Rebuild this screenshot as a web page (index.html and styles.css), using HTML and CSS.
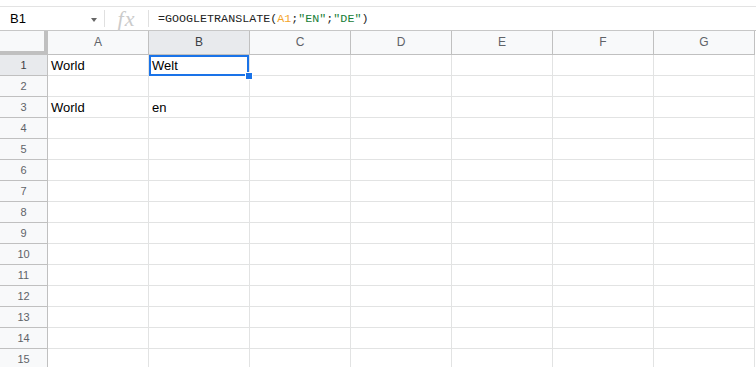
FILE: index.html
```html
<!DOCTYPE html>
<html lang="de">
<head>
    <meta charset="UTF-8">
    <title>Tabelle - GOOGLETRANSLATE</title>
    <link rel="stylesheet" href="styles.css">
</head>
<body>
    <!-- Formelleiste -->
    <div class="formula-bar">
        <div class="name-box">
            <span class="name-box-text">B1</span>
            <span class="name-box-arrow"></span>
        </div>
        <div class="fx">fx</div>
        <div class="formula">=GOOGLETRANSLATE(<span class="ref">A1</span>;<span class="str">"EN"</span>;<span class="str">"DE"</span>)</div>
    </div>

    <!-- Tabellenraster -->
    <div class="sheet">
        <div class="corner"></div>
        <div class="col-head">A</div>
        <div class="col-head active">B</div>
        <div class="col-head">C</div>
        <div class="col-head">D</div>
        <div class="col-head">E</div>
        <div class="col-head">F</div>
        <div class="col-head">G</div>

        <div class="row-head active">1</div>
        <div class="cell">World</div>
        <div class="cell selected">Welt</div>
        <div class="cell"></div><div class="cell"></div><div class="cell"></div><div class="cell"></div><div class="cell"></div>

        <div class="row-head">2</div>
        <div class="cell"></div><div class="cell"></div><div class="cell"></div><div class="cell"></div><div class="cell"></div><div class="cell"></div><div class="cell"></div>

        <div class="row-head">3</div>
        <div class="cell">World</div>
        <div class="cell">en</div>
        <div class="cell"></div><div class="cell"></div><div class="cell"></div><div class="cell"></div><div class="cell"></div>

        <div class="row-head">4</div>
        <div class="cell"></div><div class="cell"></div><div class="cell"></div><div class="cell"></div><div class="cell"></div><div class="cell"></div><div class="cell"></div>
        <div class="row-head">5</div>
        <div class="cell"></div><div class="cell"></div><div class="cell"></div><div class="cell"></div><div class="cell"></div><div class="cell"></div><div class="cell"></div>
        <div class="row-head">6</div>
        <div class="cell"></div><div class="cell"></div><div class="cell"></div><div class="cell"></div><div class="cell"></div><div class="cell"></div><div class="cell"></div>
        <div class="row-head">7</div>
        <div class="cell"></div><div class="cell"></div><div class="cell"></div><div class="cell"></div><div class="cell"></div><div class="cell"></div><div class="cell"></div>
        <div class="row-head">8</div>
        <div class="cell"></div><div class="cell"></div><div class="cell"></div><div class="cell"></div><div class="cell"></div><div class="cell"></div><div class="cell"></div>
        <div class="row-head">9</div>
        <div class="cell"></div><div class="cell"></div><div class="cell"></div><div class="cell"></div><div class="cell"></div><div class="cell"></div><div class="cell"></div>
        <div class="row-head">10</div>
        <div class="cell"></div><div class="cell"></div><div class="cell"></div><div class="cell"></div><div class="cell"></div><div class="cell"></div><div class="cell"></div>
        <div class="row-head">11</div>
        <div class="cell"></div><div class="cell"></div><div class="cell"></div><div class="cell"></div><div class="cell"></div><div class="cell"></div><div class="cell"></div>
        <div class="row-head">12</div>
        <div class="cell"></div><div class="cell"></div><div class="cell"></div><div class="cell"></div><div class="cell"></div><div class="cell"></div><div class="cell"></div>
        <div class="row-head">13</div>
        <div class="cell"></div><div class="cell"></div><div class="cell"></div><div class="cell"></div><div class="cell"></div><div class="cell"></div><div class="cell"></div>
        <div class="row-head">14</div>
        <div class="cell"></div><div class="cell"></div><div class="cell"></div><div class="cell"></div><div class="cell"></div><div class="cell"></div><div class="cell"></div>
        <div class="row-head">15</div>
        <div class="cell"></div><div class="cell"></div><div class="cell"></div><div class="cell"></div><div class="cell"></div><div class="cell"></div><div class="cell"></div>
    </div>
</body>
</html>
```

FILE: styles.css
```css
/* Grundlayout */
*,
*::before,
*::after {
    margin: 0;
    padding: 0;
    box-sizing: border-box;
}

body {
    font-family: 'Liberation Sans', Arial, sans-serif;
    background-color: #fff;
    color: #000;
    padding-top: 6px;
    overflow: hidden;
}

/* Formelleiste */
.formula-bar {
    display: flex;
    align-items: center;
    height: 25px;
    border-top: 1px solid #e3e3e3;
    border-bottom: 1px solid #c7c7c7;
}

.name-box {
    display: flex;
    align-items: center;
    justify-content: space-between;
    width: 104px;
    height: 100%;
    padding: 0 7px 0 10px;
}

.name-box-text {
    font-size: 13px;
    color: #000;
}

.name-box-arrow {
    width: 0;
    height: 0;
    border-left: 3.5px solid transparent;
    border-right: 3.5px solid transparent;
    border-top: 4px solid #666;
    margin-top: 2px;
}

.fx {
    width: 45px;
    height: 17px;
    border-left: 1px solid #e0e0e0;
    border-right: 1px solid #e0e0e0;
    font-family: 'Liberation Serif', 'Times New Roman', serif;
    font-style: italic;
    font-size: 22px;
    line-height: 17px;
    color: #cbcbcb;
    text-align: center;
    letter-spacing: 1px;
}

.formula {
    padding-left: 9px;
    font-family: 'Liberation Mono', 'Courier New', monospace;
    font-size: 11.7px;
    color: #222;
    white-space: nowrap;
}

.formula .ref {
    color: #f4a52a;
}

.formula .str {
    color: #188038;
}

/* Raster */
.sheet {
    display: grid;
    grid-template-columns: 48px repeat(7, 101px);
    grid-template-rows: 24px repeat(15, 21px);
}

.corner {
    background-color: #f8f9fa;
    border-right: 4px solid #c0c0c0;
    border-bottom: 4px solid #c0c0c0;
}

.col-head {
    background-color: #f8f9fa;
    border-right: 1px solid #c0c0c0;
    border-bottom: 1px solid #c0c0c0;
    font-size: 12px;
    color: #5f6368;
    text-align: center;
    line-height: 22px;
}

.row-head {
    background-color: #f8f9fa;
    border-right: 1px solid #c0c0c0;
    border-bottom: 1px solid #c0c0c0;
    font-size: 11px;
    color: #5f6368;
    text-align: center;
    line-height: 20px;
}

.col-head.active,
.row-head.active {
    background-color: #e8eaed;
    color: #3c4043;
}

.cell {
    border-right: 1px solid #e2e3e3;
    border-bottom: 1px solid #e2e3e3;
    font-size: 13px;
    line-height: 19px;
    padding: 1px 0 0 3px;
    white-space: nowrap;
    overflow: hidden;
}

/* Aktive Zelle */
.cell.selected {
    position: relative;
    overflow: visible;
}

.cell.selected::before {
    content: '';
    position: absolute;
    top: 0;
    left: 0;
    width: 100px;
    height: 21px;
    border: 2px solid #1a73e8;
}

.cell.selected::after {
    content: '';
    position: absolute;
    top: 17px;
    left: 96px;
    width: 8px;
    height: 8px;
    background-color: #1a73e8;
    border: 1px solid #fff;
}
```
